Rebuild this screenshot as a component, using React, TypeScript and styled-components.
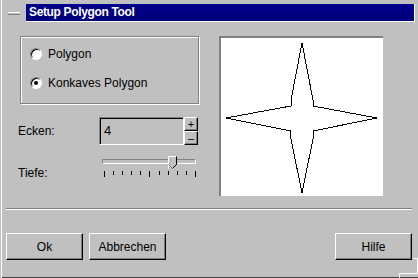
import styled, { createGlobalStyle } from 'styled-components';

const GlobalStyle = createGlobalStyle`
  body {
    margin: 0;
    background: #c0c0c0;
    font-family: "Liberation Sans", Arial, sans-serif;
  }
`;

const STAR = [
  [81, 5], [92, 62], [92, 68], [156, 80], [92, 93], [93, 96],
  [81, 155], [69, 96], [70, 93], [5, 80], [70, 68], [70, 62],
];

const TICKS = [0, 1, 2, 3, 4, 5, 6, 7, 8, 9, 10];

export default function App() {
  return (
    <Window>
      <GlobalStyle />
      <TitleRow>
        <MenuDash />
        <TitleBar>Setup Polygon Tool</TitleBar>
      </TitleRow>

      <Body>
        <LeftColumn>
          <GroupBox>
            <RadioRow>
              <RadioCircle />
              <span>Polygon</span>
            </RadioRow>
            <RadioRow>
              <RadioCircle $checked />
              <span>Konkaves Polygon</span>
            </RadioRow>
          </GroupBox>

          <SpinRow>
            <Label>Ecken:</Label>
            <SpinInput>4</SpinInput>
            <SpinButtons>
              <SpinButton>+</SpinButton>
              <SpinButton>–</SpinButton>
            </SpinButtons>
          </SpinRow>

          <SliderRow>
            <Label>Tiefe:</Label>
            <Slider>
              <Track>
                <Thumb width="9" height="13" viewBox="0 0 9 13">
                  <path d="M0.5 12.5 V0.5 H8.5" fill="none" stroke="#fff" />
                  <path d="M8.5 0.5 V8.5 L4.5 12.5" fill="none" stroke="#000" />
                  <path d="M0.5 8.5 L4.5 12.5" fill="none" stroke="#808080" />
                  <path d="M1 1 H8 V8.3 L4.5 11.8 L1 8.3 Z" fill="#c0c0c0" />
                </Thumb>
              </Track>
              <Ticks>
                {TICKS.map((t) => (
                  <Tick key={t} $long={t === 0 || t === 5 || t === 10} />
                ))}
              </Ticks>
            </Slider>
          </SliderRow>
        </LeftColumn>

        <Preview>
          <svg width="162" height="158" viewBox="0 0 162 158" shapeRendering="crispEdges">
            <polygon
              points={STAR.map((p) => p.join(',')).join(' ')}
              fill="none"
              stroke="#000"
              strokeWidth="1"
            />
          </svg>
        </Preview>
      </Body>

      <Separator />

      <ButtonRow>
        <Button>Ok</Button>
        <Button>Abbrechen</Button>
        <Spacer />
        <Button>Hilfe</Button>
      </ButtonRow>

      <CornerGrip width="19" height="20" viewBox="0 0 19 20">
        <path d="M14 0.5 H18.5 V15.5 H0.5 V20" fill="none" stroke="#fff" />
      </CornerGrip>
    </Window>
  );
}

const Window = styled.div`
  position: relative;
  width: 418px;
  height: 278px;
  box-sizing: border-box;
  display: flex;
  flex-direction: column;
  background: #c0c0c0;
  box-shadow: inset 1px 0 #c0c0c0, inset 2px 0 #fff, inset 0 -1px #404040;
  font-size: 12px;
  color: #000;
  overflow: hidden;
`;

const TitleRow = styled.div`
  display: flex;
  align-items: center;
  gap: 6px;
  padding: 4px 3px 0 8px;
`;

const MenuDash = styled.div`
  width: 12px;
  height: 3px;
  box-sizing: border-box;
  background: #c0c0c0;
  border-top: 1px solid #fff;
  border-bottom: 1px solid #808080;
`;

const TitleBar = styled.div`
  flex: 1;
  height: 17px;
  line-height: 17px;
  padding-left: 3px;
  background: linear-gradient(#00008c, #000078);
  border-right: 1px solid #fff;
  border-bottom: 1px solid #fff;
  color: #fff;
  font-weight: bold;
  font-size: 12px;
  letter-spacing: -0.35px;
`;

const Body = styled.div`
  display: flex;
  gap: 20px;
  padding: 14px 35px 0 18px;
`;

const LeftColumn = styled.div`
  width: 181px;
  display: flex;
  flex-direction: column;
`;

const GroupBox = styled.div`
  margin-left: 2px;
  height: 68px;
  box-sizing: border-box;
  display: flex;
  flex-direction: column;
  gap: 13px;
  padding: 9px 0 0 9px;
  border: 1px solid #808080;
  box-shadow: inset 1px 1px #fff, 1px 1px #fff;
`;

const RadioRow = styled.div`
  display: flex;
  align-items: center;
  gap: 6px;
  height: 16px;
`;

const RadioCircle = styled.span<{ $checked?: boolean }>`
  position: relative;
  width: 12px;
  height: 12px;
  box-sizing: border-box;
  border-radius: 50%;
  border: 1px solid;
  border-color: #808080 #fff #fff #808080;
  box-shadow: inset 1px 1px #000;
  background: #fff;

  &::after {
    content: '';
    display: ${(p) => (p.$checked ? 'block' : 'none')};
    position: absolute;
    left: 3px;
    top: 3px;
    width: 4px;
    height: 4px;
    border-radius: 50%;
    background: #000;
  }
`;

const Label = styled.span`
  width: 81px;
  flex-shrink: 0;
  line-height: 16px;
`;

const SpinRow = styled.div`
  display: flex;
  align-items: center;
  margin-top: 13px;
  height: 28px;
`;

const SpinInput = styled.div`
  width: 85px;
  height: 28px;
  box-sizing: border-box;
  padding-left: 4px;
  line-height: 26px;
  font-size: 13px;
  border: 1px solid;
  border-color: #808080 #fff #fff #808080;
  box-shadow: inset 1px 1px #000;
`;

const SpinButtons = styled.div`
  display: flex;
  flex-direction: column;
`;

const SpinButton = styled.div`
  width: 14px;
  height: 14px;
  box-sizing: border-box;
  display: flex;
  align-items: center;
  justify-content: center;
  font-size: 11px;
  line-height: 1;
  border: 1px solid;
  border-color: #fff #000 #000 #fff;
  box-shadow: inset -1px -1px #808080;
`;

const SliderRow = styled.div`
  display: flex;
  align-items: flex-end;
  margin-top: 10px;
  height: 26px;
`;

const Slider = styled.div`
  align-self: flex-start;
  margin-left: 3px;
  width: 94px;
  padding-top: 4px;
`;

const Track = styled.div`
  position: relative;
  height: 5px;
  box-sizing: border-box;
  border: 1px solid;
  border-color: #808080 #fff #fff #808080;
`;

const Thumb = styled.svg`
  position: absolute;
  left: 65px;
  top: -4px;
`;

const Ticks = styled.div`
  display: flex;
  justify-content: space-between;
  align-items: flex-start;
  width: 92px;
  margin: 7px 0 0 2px;
`;

const Tick = styled.span<{ $long?: boolean }>`
  width: 1px;
  height: ${(p) => (p.$long ? 6 : 4)}px;
  background: #000;
`;

const Preview = styled.div`
  width: 164px;
  height: 160px;
  box-sizing: border-box;
  border-top: 2px solid #808080;
  border-left: 2px solid #808080;
  background: #fff;

  svg {
    display: block;
  }
`;

const Separator = styled.div`
  margin: 12px 6px 0 6px;
  border-top: 1px solid #808080;
  border-bottom: 1px solid #fff;
`;

const ButtonRow = styled.div`
  display: flex;
  gap: 6px;
  margin-top: 23px;
  padding: 0 6px;
`;

const Spacer = styled.div`
  flex: 1;
`;

const Button = styled.button`
  width: 77px;
  height: 27px;
  box-sizing: border-box;
  padding: 0;
  background: #c0c0c0;
  font-family: inherit;
  font-size: 12px;
  color: #000;
  border: 1px solid;
  border-color: #fff #000 #000 #fff;
  box-shadow: inset -1px -1px #808080;
`;

const CornerGrip = styled.svg`
  position: absolute;
  right: 0;
  bottom: 0;
`;
